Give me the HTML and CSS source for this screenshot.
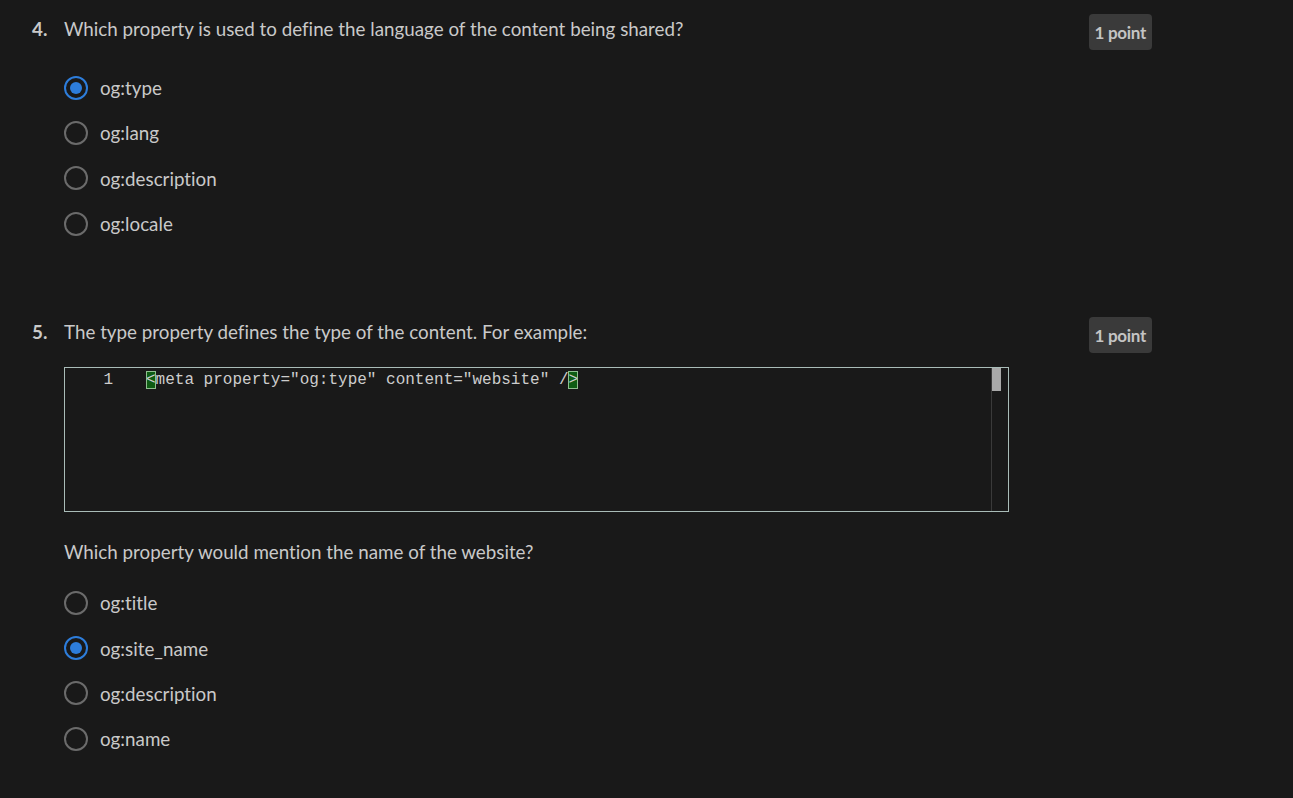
FILE: index.html
```html
<!DOCTYPE html>
<html>
<head>
<meta charset="utf-8">
<link rel="stylesheet" href="styles.css">
</head>
<body>
<main class="page">
  <section class="question q4">
    <div class="q-head">
      <span class="q-num">4.</span>
      <p class="q-text">Which property is used to define the language of the content being shared?</p>
      <span class="badge">1 point</span>
    </div>
    <ul class="options">
      <li class="option"><span class="radio checked"></span><span class="label">og:type</span></li>
      <li class="option"><span class="radio"></span><span class="label">og:lang</span></li>
      <li class="option"><span class="radio"></span><span class="label">og:description</span></li>
      <li class="option"><span class="radio"></span><span class="label">og:locale</span></li>
    </ul>
  </section>

  <section class="question q5">
    <div class="q-head">
      <span class="q-num">5.</span>
      <p class="q-text">The type property defines the type of the content. For example:</p>
      <span class="badge">1 point</span>
    </div>
    <div class="body">
      <div class="code">
        <div class="code-line">
          <span class="ln">1</span>
          <span class="src"><span class="br">&lt;</span>meta property="og:type" content="website" /<span class="br">&gt;</span></span>
        </div>
        <div class="scroll"><span class="thumb"></span></div>
      </div>
      <p class="sub">Which property would mention the name of the website?</p>
      <ul class="options">
        <li class="option"><span class="radio"></span><span class="label">og:title</span></li>
        <li class="option"><span class="radio checked"></span><span class="label">og:site_name</span></li>
        <li class="option"><span class="radio"></span><span class="label">og:description</span></li>
        <li class="option"><span class="radio"></span><span class="label">og:name</span></li>
      </ul>
    </div>
  </section>
</main>
</body>
</html>
```

FILE: styles.css
```css
html, body {
  margin: 0;
  padding: 0;
  background: #191919;
}
body {
  font-family: "Lato", "Open Sans", sans-serif;
  font-variant-ligatures: none;
  color: #c9c9c9;
  font-size: 18.8px;
  height: 798px;
  overflow: hidden;
}
.page {
  padding: 14px 141px 0 32px;
}
.question {
  display: flex;
  flex-direction: column;
}
.q5 {
  margin-top: 71px;
}
.q-head {
  display: flex;
  align-items: flex-start;
}
.q-num {
  width: 32px;
  font-weight: 700;
  line-height: 29px;
  color: #c9c9c9;
}
.q-text {
  flex: 1;
  margin: 0;
  line-height: 29px;
}
.badge {
  background: #3a3a3a;
  color: #c4c4c4;
  font-weight: 700;
  font-size: 17px;
  height: 36px;
  line-height: 38px;
  padding: 0 6px;
  border-radius: 4px;
  letter-spacing: -0.3px;
}
.options {
  list-style: none;
  margin: 0;
  padding: 0 0 0 32px;
}
.q4 .options {
  margin-top: 15px;
}
.body {
  padding-left: 32px;
}
.body .options {
  padding-left: 0;
  margin-top: 16px;
}
.option {
  display: flex;
  align-items: center;
  height: 45.3px;
}
.radio {
  box-sizing: border-box;
  width: 24px;
  height: 24px;
  border: 2px solid #6b6b6b;
  border-radius: 50%;
  margin-right: 12px;
  display: flex;
  align-items: center;
  justify-content: center;
}
.radio.checked {
  border-color: #2d7ddb;
}
.radio.checked::after {
  content: "";
  width: 12px;
  height: 12px;
  border-radius: 50%;
  background: #2d7ddb;
}
.label {
  color: #c9c9c9;
}
.code {
  margin-top: 14px;
  width: 945px;
  height: 145px;
  box-sizing: border-box;
  border: 1px solid #a9bcb8;
  display: flex;
  justify-content: space-between;
}
.code-line {
  display: flex;
  font-family: "Liberation Mono", "DejaVu Sans Mono", monospace;
  font-size: 16px;
  color: #cdcdcd;
  height: 24px;
  line-height: 24px;
}
.ln {
  text-align: right;
  padding-right: 33px;
  box-sizing: border-box;
  width: 81px;
}
.br {
  background: #0e5c13;
  outline: 1px solid #8fbf8f;
  outline-offset: -1px;
}
.scroll {
  width: 17px;
  border-left: 1px solid #3a3a3a;
  box-sizing: border-box;
  position: relative;
}
.thumb {
  position: absolute;
  left: 0;
  top: 0;
  width: 9px;
  height: 23px;
  background: #a9a9a9;
}
.sub {
  margin: 28px 0 0;
  line-height: 24px;
}
```
